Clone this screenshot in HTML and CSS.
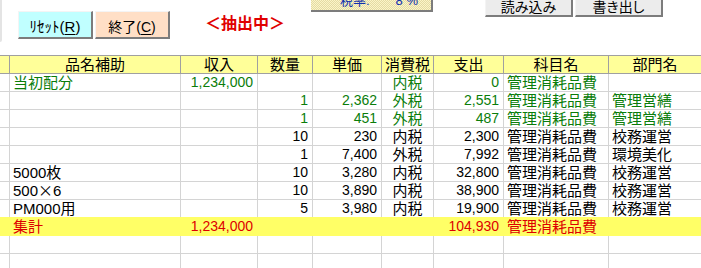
FILE: index.html
```html
<!DOCTYPE html>
<html lang="ja">
<head>
<meta charset="utf-8">
<title>抽出</title>
<link rel="stylesheet" href="styles.css">
</head>
<body>
<div class="top">
  <div class="edge"></div>
  <button class="btn btn-reset">ﾘｾｯﾄ(<u>R</u>)</button>
  <button class="btn btn-end">終了(<u>C</u>)</button>
  <div class="status">＜抽出中＞</div>
  <div class="tax">税率:　　8 %</div>
  <button class="btn btn-gray btn-read">読み込み</button>
  <button class="btn btn-gray btn-write">書き出し</button>
</div>
<div class="sheet">
  <div class="row head">
    <div class="c"></div><div class="c m">品名補助</div><div class="c m">収入</div><div class="c m">数量</div><div class="c m">単価</div><div class="c m">消費税</div><div class="c m">支出</div><div class="c m">科目名</div><div class="c m">部門名</div>
  </div>
  <div class="row green">
    <div class="c"></div><div class="c l">当初配分</div><div class="c r">1,234,000</div><div class="c r"></div><div class="c r"></div><div class="c m">内税</div><div class="c r">0</div><div class="c l">管理消耗品費</div><div class="c l"></div>
  </div>
  <div class="row green">
    <div class="c"></div><div class="c l"></div><div class="c r"></div><div class="c r">1</div><div class="c r">2,362</div><div class="c m">外税</div><div class="c r">2,551</div><div class="c l">管理消耗品費</div><div class="c l">管理営繕</div>
  </div>
  <div class="row green">
    <div class="c"></div><div class="c l"></div><div class="c r"></div><div class="c r">1</div><div class="c r">451</div><div class="c m">外税</div><div class="c r">487</div><div class="c l">管理消耗品費</div><div class="c l">管理営繕</div>
  </div>
  <div class="row">
    <div class="c"></div><div class="c l"></div><div class="c r"></div><div class="c r">10</div><div class="c r">230</div><div class="c m">内税</div><div class="c r">2,300</div><div class="c l">管理消耗品費</div><div class="c l">校務運営</div>
  </div>
  <div class="row">
    <div class="c"></div><div class="c l"></div><div class="c r"></div><div class="c r">1</div><div class="c r">7,400</div><div class="c m">外税</div><div class="c r">7,992</div><div class="c l">管理消耗品費</div><div class="c l">環境美化</div>
  </div>
  <div class="row">
    <div class="c"></div><div class="c l">5000枚</div><div class="c r"></div><div class="c r">10</div><div class="c r">3,280</div><div class="c m">内税</div><div class="c r">32,800</div><div class="c l">管理消耗品費</div><div class="c l">校務運営</div>
  </div>
  <div class="row">
    <div class="c"></div><div class="c l">500<span class="wide">×</span>6</div><div class="c r"></div><div class="c r">10</div><div class="c r">3,890</div><div class="c m">内税</div><div class="c r">38,900</div><div class="c l">管理消耗品費</div><div class="c l">校務運営</div>
  </div>
  <div class="row before-total">
    <div class="c"></div><div class="c l">PM000用</div><div class="c r"></div><div class="c r">5</div><div class="c r">3,980</div><div class="c m">内税</div><div class="c r">19,900</div><div class="c l">管理消耗品費</div><div class="c l">校務運営</div>
  </div>
  <div class="row total">
    <div class="c"></div><div class="c l">集計</div><div class="c r">1,234,000</div><div class="c r"></div><div class="c r"></div><div class="c m"></div><div class="c r">104,930</div><div class="c l">管理消耗品費</div><div class="c l"></div>
  </div>
  <div class="row">
    <div class="c"></div><div class="c"></div><div class="c"></div><div class="c"></div><div class="c"></div><div class="c"></div><div class="c"></div><div class="c"></div><div class="c"></div>
  </div>
  <div class="row">
    <div class="c"></div><div class="c"></div><div class="c"></div><div class="c"></div><div class="c"></div><div class="c"></div><div class="c"></div><div class="c"></div><div class="c"></div>
  </div>
</div>
</body>
</html>
```
FILE: styles.css
```css
html, body {
  margin: 0;
  padding: 0;
  background: #ffffff;
  overflow: hidden;
}
body {
  font-family: "Liberation Sans", "Noto Sans CJK JP", sans-serif;
  font-size: 15px;
  color: #000000;
}

/* top control strip */
.top {
  display: flex;
  align-items: flex-start;
  height: 55px;
}
.edge {
  width: 2px;
  height: 42px;
  background: #e4e4e4;
  border-bottom-right-radius: 3px;
  margin-right: 16px;
}
.btn {
  box-sizing: border-box;
  margin: 0;
  padding: 0;
  font-family: "Liberation Sans", "Noto Sans CJK JP", sans-serif;
  font-size: 14px;
  color: #000000;
  border-top: 1px solid #f4f4f4;
  border-left: 1px solid #f4f4f4;
  border-right: 2px solid #7c7c7c;
  border-bottom: 2px solid #7c7c7c;
  text-align: center;
  white-space: nowrap;
}
.btn u {
  text-underline-offset: 2px;
}
.btn-reset {
  width: 75px;
  height: 28px;
  margin-top: 11px;
  padding-top: 2px;
  background: #c0ffff;
  font-size: 15px;
}
.btn-end {
  width: 75px;
  height: 28px;
  margin-top: 11px;
  margin-left: 2px;
  padding-top: 2px;
  background: #ffdfc6;
}
.status {
  width: 80px;
  margin-left: 35px;
  margin-top: 15px;
  font-size: 16px;
  line-height: 18px;
  font-weight: bold;
  color: #e00000;
  white-space: nowrap;
}
.tax {
  box-sizing: border-box;
  width: 122px;
  height: 20px;
  margin-top: -8px;
  margin-left: 26px;
  padding-left: 29px;
  font-size: 13px;
  line-height: 17px;
  color: #1030b0;
  white-space: pre;
  background: repeating-conic-gradient(#fbf5c8 0 25%, #e4dba4 0 50%) 0 0 / 2px 2px;
  border-right: 2px solid #7c7c7c;
  border-bottom: 2px solid #7c7c7c;
}
.btn-gray {
  width: 88px;
  height: 21px;
  margin-top: -4px;
  padding-top: 1px;
  background: #ececec;
  line-height: 16px;
  font-feature-settings: "palt";
}
.btn-read {
  margin-left: 52px;
}
.btn-write {
  margin-left: 2px;
}

/* sheet */
.sheet {
  display: flex;
  flex-direction: column;
}
.row {
  display: grid;
  grid-template-columns: 9px 171px 77px 55px 69px 52px 70px 105px 93px;
  height: 18px;
  box-sizing: border-box;
  border-bottom: 1px solid #d4d4d4;
}
.c {
  box-sizing: border-box;
  height: 17px;
  line-height: 17px;
  white-space: nowrap;
  border-left: 1px solid #d4d4d4;
}
.c:first-child {
  border-left: none;
}
.l {
  text-align: left;
  padding-left: 3px;
}
.r {
  text-align: right;
  padding-right: 4px;
  font-size: 14px;
}
.m {
  text-align: center;
}
.wide {
  font-family: "Noto Sans CJK JP", sans-serif;
  line-height: 1;
}

.head {
  height: 19px;
  background: #ffff99;
  border-top: 1px solid #a0a0a0;
  border-bottom: 1px solid #a0a0a0;
}
.head .c {
  border-left-color: #a0a0a0;
}
.green {
  color: #0a7d0a;
}
.before-total {
  border-bottom-color: #ffff66;
}
.total {
  background: #ffff66;
  color: #dd0000;
  border-bottom-color: #ffff66;
}
.total .c {
  border-left-color: #ffff66;
}
```
